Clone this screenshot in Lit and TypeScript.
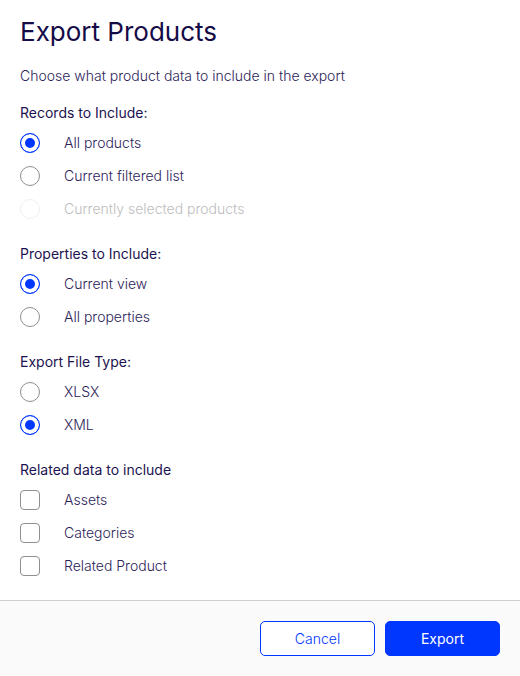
import { css, html, LitElement } from "lit";
import { customElement, property } from "lit/decorators.js";

interface Choice {
  label: string;
  checked?: boolean;
  disabled?: boolean;
}

@customElement("option-group")
export class OptionGroup extends LitElement {
  @property() heading = "";
  @property() name = "";
  @property() type: "radio" | "checkbox" = "radio";
  @property({ attribute: false }) choices: Choice[] = [];

  render() {
    return html`
      <fieldset>
        <legend>${this.heading}</legend>
        ${this.choices.map(
          (choice) => html`
            <label class="choice ${choice.disabled ? "disabled" : ""}">
              <input
                type=${this.type}
                name=${this.name}
                ?checked=${choice.checked}
                ?disabled=${choice.disabled}
              />
              <span>${choice.label}</span>
            </label>
          `
        )}
      </fieldset>
    `;
  }

  static styles = css`
    :host {
      display: block;
    }

    fieldset {
      margin: 0;
      padding: 0;
      border: 0;
      min-width: 0;
    }

    legend {
      padding: 0;
      margin-bottom: 8px;
      line-height: 22px;
      font-weight: 400;
      color: #1c1350;
    }

    .choice {
      display: flex;
      align-items: center;
      gap: 24px;
      line-height: 22px;
      color: #2c2459;
      cursor: pointer;
    }

    .choice + .choice {
      margin-top: 11px;
    }

    .disabled {
      color: #bdbdbd;
      cursor: default;
    }

    input {
      appearance: none;
      box-sizing: border-box;
      flex: none;
      width: 20px;
      height: 20px;
      margin: 0;
      border: 1px solid #8f8f8f;
      background: #ffffff;
    }

    input[type="radio"] {
      border-radius: 50%;
    }

    input[type="checkbox"] {
      border-radius: 4px;
    }

    input:checked {
      border-color: #0037ff;
      background: #0037ff;
    }

    /* white ring between the border and the dot */
    input[type="radio"]:checked {
      box-shadow: inset 0 0 0 4px #ffffff;
    }

    input:disabled {
      border-color: #f0f0f0;
    }
  `;
}

@customElement("app-root")
export class AppRoot extends LitElement {
  private records: Choice[] = [
    { label: "All products", checked: true },
    { label: "Current filtered list" },
    { label: "Currently selected products", disabled: true },
  ];

  private properties: Choice[] = [
    { label: "Current view", checked: true },
    { label: "All properties" },
  ];

  private fileTypes: Choice[] = [
    { label: "XLSX" },
    { label: "XML", checked: true },
  ];

  private related: Choice[] = [
    { label: "Assets" },
    { label: "Categories" },
    { label: "Related Product" },
  ];

  render() {
    return html`
      <main>
        <h1>Export Products</h1>
        <p>Choose what product data to include in the export</p>
        <form>
          <option-group
            heading="Records to Include:"
            name="records"
            .choices=${this.records}
          ></option-group>
          <option-group
            heading="Properties to Include:"
            name="properties"
            .choices=${this.properties}
          ></option-group>
          <option-group
            heading="Export File Type:"
            name="file-type"
            .choices=${this.fileTypes}
          ></option-group>
          <option-group
            heading="Related data to include"
            name="related"
            type="checkbox"
            .choices=${this.related}
          ></option-group>
        </form>
      </main>
      <footer>
        <button class="cancel" type="button">Cancel</button>
        <button class="export" type="button">Export</button>
      </footer>
    `;
  }

  static styles = css`
    :host {
      display: flex;
      flex-direction: column;
      min-height: 100vh;
      background: #ffffff;
      color: #2c2459;
      font-family: Inter, "Liberation Sans", sans-serif;
      font-size: 14px;
      font-weight: 300;
      line-height: 22px;
    }

    main {
      flex: 1;
      padding: 14px 20px 22px;
    }

    h1 {
      margin: 0;
      color: #140b47;
      font-size: 26px;
      font-weight: 400;
      line-height: 36px;
    }

    p {
      margin: 15px 0;
    }

    form {
      display: flex;
      flex-direction: column;
      gap: 23px;
    }

    footer {
      display: flex;
      justify-content: flex-end;
      gap: 10px;
      padding: 20px;
      border-top: 1px solid #d0d0d0;
      background: #fafafa;
    }

    button {
      box-sizing: border-box;
      min-width: 115px;
      height: 35px;
      padding: 0 16px;
      border: 1px solid #0037ff;
      border-radius: 5px;
      font: inherit;
      cursor: pointer;
    }

    .cancel {
      background: #ffffff;
      color: #0037ff;
    }

    .export {
      background: #0037ff;
      color: #ffffff;
      font-weight: 400;
    }
  `;
}
